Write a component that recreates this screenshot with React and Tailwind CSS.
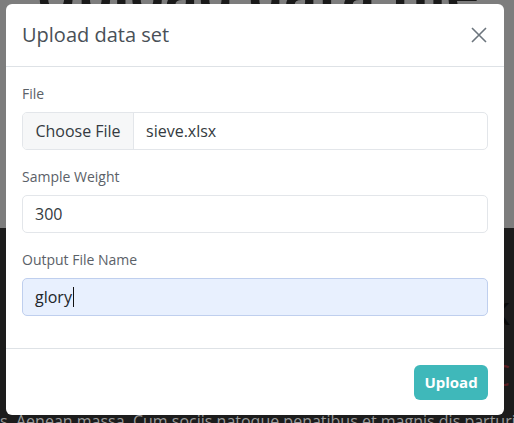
export default function App() {
  const font = { fontFamily: '"Open Sans", "Noto Sans", sans-serif' };
  return (
    <div className="relative w-[514px] h-[423px] overflow-hidden bg-[#1c1c1c]" style={font}>
      {/* dimmed page behind the modal */}
      <div className="h-[228px] bg-[#7d7d7d] flex justify-center">
        <h1 className="text-[56px] font-bold leading-none -mt-[36px] text-[#1a1a1a] whitespace-nowrap">Upload data file</h1>
      </div>
      <div className="flex flex-col h-[195px] px-1">
        <div className="flex-1 flex flex-col items-end pt-[62px] gap-[30px]">
          <span className="text-[40px] leading-none text-[#0a0a0a]">k</span>
          <span className="text-[30px] leading-none text-[#5a1f24]">C</span>
        </div>
        <p className="text-[16px] text-[#9a9a9a] whitespace-nowrap leading-none translate-y-[6px] -ml-[4px]">
          s. Aenean massa. Cum sociis natoque penatibus et magnis dis parturient montes
        </p>
      </div>

      {/* modal */}
      <div className="absolute left-[6px] top-[4px] w-[498px] bg-white rounded-[6px] flex flex-col">
        <div className="flex items-center justify-between px-4 h-[63px] border-b border-[#dee2e6]">
          <h5 className="text-[20px] text-[#495057] leading-[1.5]">Upload data set</h5>
          <svg width="16" height="16" viewBox="0 0 16 16" className="mr-[1px]">
            <path d="M1 1L15 15M15 1L1 15" stroke="#6c757d" strokeWidth="1.6" />
          </svg>
        </div>
        <div className="p-4 pb-0">
          <div className="mb-4">
            <label className="block text-[14px] leading-[21px] text-[#5b6168] mb-2">File</label>
            <div className="flex h-[38px] border border-[#e3e6ea] rounded-[5px] overflow-hidden text-[16px] text-[#343a40]">
              <div className="w-[111px] shrink-0 bg-[#f6f7f8] border-r border-[#e3e6ea] flex items-center justify-center">Choose File</div>
              <div className="flex items-center pl-3">sieve.xlsx</div>
            </div>
          </div>
          <div className="mb-4">
            <label className="block text-[14px] leading-[21px] text-[#5b6168] mb-2">Sample Weight</label>
            <div className="flex items-center h-[38px] border border-[#e3e6ea] rounded-[5px] px-3 text-[16px] text-[#343a40]">300</div>
          </div>
          <div className="mb-8">
            <label className="block text-[14px] leading-[21px] text-[#5b6168] mb-2">Output File Name</label>
            <div className="flex items-center h-[38px] border border-[#bfcfee] bg-[#e8f0fe] rounded-[5px] px-3 text-[16px] text-[#212529]">
              glory<span className="inline-block w-[1px] h-[20px] bg-[#111] ml-[1px]" />
            </div>
          </div>
        </div>
        <div className="border-t border-[#dee2e6] flex justify-end px-4 pt-4 pb-[15px]">
          <button className="h-[35px] w-[74px] rounded-[6px] bg-[#3fb8ba] text-white text-[15px] font-bold">Upload</button>
        </div>
      </div>
    </div>
  );
}
